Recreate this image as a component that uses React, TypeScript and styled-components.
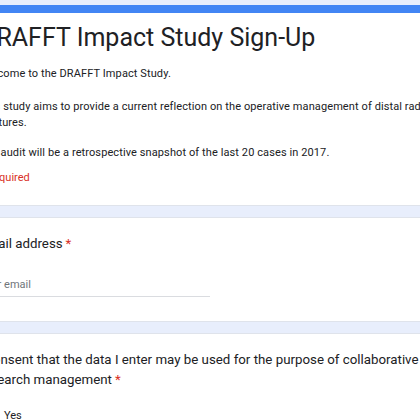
import React from "react";
import styled, { createGlobalStyle } from "styled-components";

const Global = createGlobalStyle`
  html, body {
    margin: 0;
    padding: 0;
    background: #e8eefc;
    font-family: Roboto, "Liberation Sans", Arial, sans-serif;
    color: #202124;
  }
`;

const Page = styled.div`
  width: 420px;
  height: 420px;
  overflow: hidden;
  padding-top: 5px;
  box-sizing: border-box;
`;

const Column = styled.div`
  display: flex;
  flex-direction: column;
  gap: 11px;
  margin-left: -40px;
  width: 500px;
`;

const Card = styled.section<{ $accent?: boolean }>`
  background: #ffffff;
  border-radius: 6px;
  border: 1px solid #dfe3eb;
  border-top: ${(p) => (p.$accent ? "8px solid #4285f4" : "1px solid #dfe3eb")};
  padding: ${(p) => (p.$accent ? "9px 18px 19px" : "16px 18px 24px")};
  display: flex;
  flex-direction: column;
`;

const Title = styled.h1`
  margin: 0 0 0 1px;
  font-size: 25px;
  line-height: 32px;
  font-weight: 400;
`;

const Desc = styled.p<{ $top?: number }>`
  margin: ${(p) => p.$top ?? 0}px 0 0;
  font-size: 11px;
  line-height: 16px;
  letter-spacing: 0.1px;
  white-space: nowrap;
`;

const Required = styled.div`
  margin-top: 9px;
  font-size: 11px;
  line-height: 16px;
  color: #d93025;
`;

const Question = styled.div`
  font-size: 13.3px;
  line-height: 20px;
  white-space: nowrap;
`;

const Star = styled.span`
  color: #d93025;
  margin-left: 3px;
`;

const Input = styled.div`
  margin-top: 19px;
  width: 231px;
  padding: 4px 0 3px;
  border-bottom: 1px solid #dadce0;
  font-size: 11px;
  line-height: 16px;
  color: #70757a;
`;

const Options = styled.div`
  margin-top: 18px;
  display: flex;
  flex-direction: column;
`;

const Option = styled.label`
  display: flex;
  align-items: center;
  gap: 10px;
  font-size: 11px;
  line-height: 16px;
`;

const Radio = styled.span`
  width: 13px;
  height: 13px;
  border: 1.5px solid #5f6368;
  border-radius: 50%;
  flex: none;
`;

export default function App() {
  return (
    <>
      <Global />
      <Page>
        <Column>
          <Card $accent>
            <Title>DRAFFT Impact Study Sign-Up</Title>
            <Desc $top={12}>Welcome to the DRAFFT Impact Study.</Desc>
            <Desc $top={17}>
              This study aims to provide a current reflection on the operative management of distal radius
              <br />
              fractures.
            </Desc>
            <Desc $top={14}>The audit will be a retrospective snapshot of the last 20 cases in 2017.</Desc>
            <Required>* Required</Required>
          </Card>
          <Card>
            <Question>
              Email address<Star>*</Star>
            </Question>
            <Input>Your email</Input>
          </Card>
          <Card>
            <Question>
              I consent that the data I enter may be used for the purpose of collaborative
              <br />
              research management<Star>*</Star>
            </Question>
            <Options>
              <Option>
                <Radio />
                Yes
              </Option>
            </Options>
          </Card>
        </Column>
      </Page>
    </>
  );
}
